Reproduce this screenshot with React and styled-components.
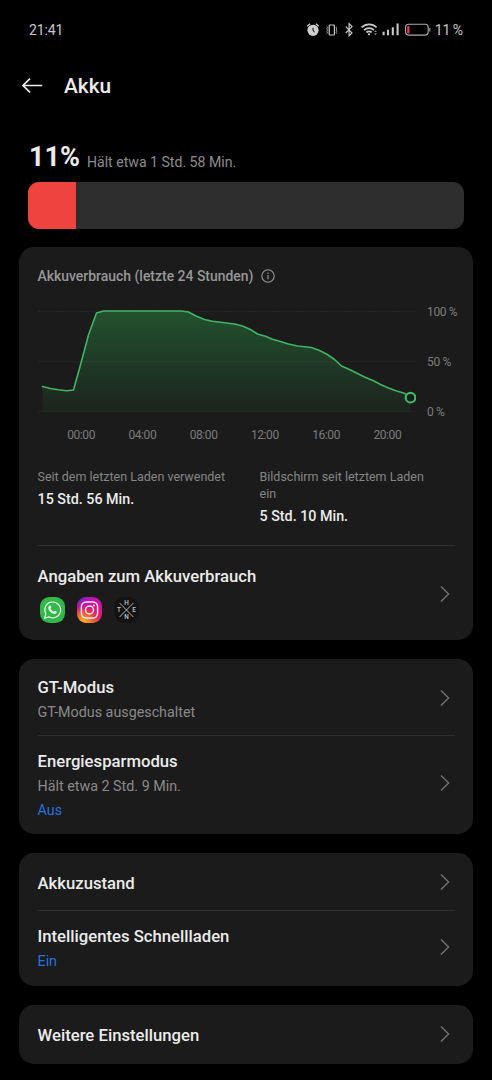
import styled, { createGlobalStyle } from "styled-components";

const GlobalStyle = createGlobalStyle`
  * {
    box-sizing: border-box;
  }

  body {
    margin: 0;
    background-color: #000;
    color: #ececec;
    font-family: Roboto, "Liberation Sans", sans-serif;
  }

  svg {
    display: block;
    flex-shrink: 0;
  }
`;

const Screen = styled.main`
  display: flex;
  flex-direction: column;
  width: 492px;
  height: 1080px;
  overflow: hidden;
  background-color: #000;

  > * {
    flex-shrink: 0;
  }
`;

const StatusBar = styled.div`
  display: flex;
  justify-content: space-between;
  align-items: center;
  height: 60px;
  padding: 0 29px;
  font-size: 14px;
  letter-spacing: -0.1px;
  color: #c8c8c8;
`;

const StatusIcons = styled.div`
  display: flex;
  align-items: center;
`;

const Percent = styled.span`
  margin-left: 4px;
  word-spacing: -0.8px;
`;

const Header = styled.header`
  display: flex;
  align-items: center;
  gap: 21px;
  height: 52px;
  padding-left: 21px;
`;

const Title = styled.h1`
  margin: 0;
  font-size: 20.8px;
  font-weight: 500;
  line-height: 24px;
`;

const Summary = styled.section`
  display: flex;
  align-items: flex-end;
  gap: 7px;
  height: 70px;
  padding: 0 28px 9px 29px;
`;

const Level = styled.span`
  font-size: 27px;
  font-weight: 700;
  line-height: 32px;
`;

const Remaining = styled.span`
  margin-bottom: 3px;
  font-size: 14.1px;
  line-height: 16px;
  color: #8c8c8c;
`;

const Bar = styled.div`
  height: 47px;
  margin: 0 28px 18px;
  border-radius: 11px;
  background-color: #2e2e2e;
  overflow: hidden;
`;

const BarFill = styled.div`
  height: 100%;
  background-color: #ee433f;
`;

const Card = styled.section`
  height: ${({ $height }) => $height}px;
  margin: 0 19px 19px;
  padding: 0 18.5px;
  border-radius: 15px;
  background-color: #1b1b1b;
`;

const CardHead = styled.div`
  display: flex;
  align-items: center;
  gap: 8px;
  height: 54px;
  padding-top: 4px;
  font-size: 13.95px;
  font-weight: 500;
  color: #979797;
`;

const ChartArea = styled.div`
  display: flex;
  gap: 11px;
  height: 120px;
`;

const YAxis = styled.div`
  display: flex;
  flex-direction: column;
  justify-content: space-between;
  height: 118px;
  padding-top: 4px;
  font-size: 12px;
  letter-spacing: -0.35px;
  line-height: 14px;
  color: #7c7c7c;
  white-space: nowrap;
`;

const XAxis = styled.div`
  display: flex;
  margin-top: 7px;
  padding-left: 13px;
  font-size: 12px;
  letter-spacing: -0.4px;
  line-height: 14px;
  color: #7c7c7c;

  span {
    width: 61.25px;
    text-align: center;
  }
`;

const Stats = styled.div`
  display: grid;
  grid-template-columns: 222px 175px;
  height: 103px;
  padding-top: 26px;
`;

const StatLabel = styled.div`
  font-size: 12.5px;
  line-height: 17px;
  color: #858585;
`;

const StatValue = styled.div`
  margin-top: 5px;
  font-size: 14.3px;
  font-weight: 500;
  line-height: 18px;
`;

const Row = styled.div`
  display: flex;
  justify-content: space-between;
  align-items: center;
  height: ${({ $height }) => $height}px;
  padding: ${({ $top }) => $top}px 4.5px ${({ $bottom }) => $bottom}px 0;
`;

const RowBody = styled.div`
  padding-top: ${({ $single }) => ($single ? 4 : 5)}px;
`;

const Divider = styled.div`
  height: 1px;
  background-color: #303030;
`;

const RowTitle = styled.div`
  font-size: 16.7px;
  font-weight: 500;
  line-height: 24px;
`;

const RowText = styled.div`
  font-size: 14.3px;
  line-height: 24px;
  color: ${({ $accent }) => ($accent ? "#2673dc" : "#8a8a8a")};
`;

const Apps = styled.div`
  display: flex;
  gap: 12px;
  margin: 8px 0 6px;
  padding-left: 2px;
`;

const chartPoints = [
  [42, 386.5], [50, 388.5], [58, 389.8], [66, 390.7], [73, 390], [80.5, 363],
  [88, 335], [96, 313], [103, 311], [181, 311], [188, 312], [196, 316.3],
  [204, 319.5], [212, 321.3], [220, 322.3], [234, 324], [242, 326],
  [250, 329.5], [257, 334], [265, 336.2], [272, 339.3], [280, 341.5],
  [288, 344], [297, 346], [311, 347.5], [319, 350.5], [326, 354],
  [334, 359.5], [341, 366], [349, 369.5], [356, 373], [364, 377],
  [373, 380.7], [380, 384.5], [388, 388], [396, 391], [404, 393.3], [410, 397.5],
];

const hours = ["00:00", "04:00", "08:00", "12:00", "16:00", "20:00"];

function UsageChart() {
  const line = chartPoints.map((p) => p.join(",")).join(" ");

  return (
    <svg width="378.5" height="120" viewBox="37.5 301 378.5 120">
      <defs>
        <linearGradient id="usage" x1="0" y1="0" x2="0" y2="1">
          <stop offset="0" stopColor="#22522f" />
          <stop offset="1" stopColor="#1c231d" />
        </linearGradient>
      </defs>
      <polygon points={`42,412 ${line} 410,412`} fill="url(#usage)" />
      {[311.5, 361.5, 411.5].map((y) => (
        <line
          key={y}
          x1="37.5"
          x2="416"
          y1={y}
          y2={y}
          stroke="#fff"
          strokeOpacity="0.05"
          strokeDasharray="2 1"
        />
      ))}
      <polyline
        points={line}
        fill="none"
        stroke="#41b465"
        strokeWidth="1.6"
        strokeLinejoin="round"
        strokeLinecap="round"
      />
      <circle cx="410" cy="397.7" r="4.8" fill="#1b1b1b" stroke="#3dba62" strokeWidth="2.2" />
    </svg>
  );
}

function Chevron() {
  return (
    <svg width="10" height="18" viewBox="0 0 10 18" fill="none" stroke="#727272" strokeWidth="1.4">
      <path d="M1 1.4 8.6 9 1 16.6" />
    </svg>
  );
}

function BackArrow() {
  return (
    <svg width="22" height="16" viewBox="0 0 22 16" fill="none" stroke="#ececec" strokeWidth="1.7">
      <path d="M21.3 7.5H2M9 0.7 2 7.5l7 6.8" />
    </svg>
  );
}

function InfoIcon() {
  return (
    <svg width="14" height="14" viewBox="0 0 14 14" fill="none" stroke="#979797" strokeWidth="1.1">
      <circle cx="7" cy="7" r="6.2" />
      <path d="M7 6v4.3M7 3.6v1.3" />
    </svg>
  );
}

function SystemIcons() {
  return (
    <svg width="125" height="16" viewBox="306 22 125 16" fill="none" stroke="#c8c8c8">
      {/* alarm */}
      <circle cx="313" cy="30.3" r="5.6" fill="#d0d0d0" stroke="none" />
      <path d="M307.2 26.2l2.8-2.3M318.8 26.2l-2.8-2.3" strokeWidth="1.4" />
      <path d="M313 27.8v2.9l1.8 1.4" stroke="#000" strokeWidth="1" />
      {/* vibrate */}
      <rect x="329.2" y="25" width="5.2" height="10" rx="0.8" strokeWidth="1.2" />
      <path d="M326.8 26.5l.7 1.2-.7 1.2.7 1.2-.7 1.2.7 1.2-.7 1.2M336.8 26.5l-.7 1.2.7 1.2-.7 1.2.7 1.2-.7 1.2.7 1.2" strokeWidth="0.8" />
      {/* bluetooth */}
      <path d="M345.8 26.6l6.2 6.4-2.9 2.9V23.7l2.9 2.9-6.2 6.4" strokeWidth="1.2" />
      {/* wifi */}
      <path d="M361.6 27.4a10.6 10.6 0 0 1 15 0M364.1 30.1a7 7 0 0 1 9.9 0M366.5 32.5a3.6 3.6 0 0 1 5.1 0" strokeWidth="1.8" />
      <circle cx="369" cy="34.3" r="1.1" fill="#d0d0d0" stroke="none" />
      <path d="M374.2 31.8l1.3-1.3 1.3 1.3zM374.2 33.6l1.3 1.3 1.3-1.3z" fill="#c8c8c8" stroke="none" />
      {/* signal */}
      <path d="M383.6 35.2v-3.4M388 35.2v-5.4M392.8 35.2v-8M397.6 35.2V23.5" strokeWidth="2.1" />
      {/* battery */}
      <rect x="405.6" y="24.3" width="22.6" height="10.8" rx="3" stroke="#aaa" strokeWidth="1.1" />
      <path d="M429.8 28v3.4" stroke="#999" strokeWidth="1.2" />
      <rect x="407.2" y="26" width="2.3" height="7.5" rx="1" fill="#e0404a" stroke="none" />
    </svg>
  );
}

function WhatsAppIcon() {
  return (
    <svg width="25" height="26" viewBox="0 0 25 26">
      <rect width="25" height="26" rx="9.5" fill="#34b64b" />
      <path
        d="M4.6 21.3l1.2-4.5a7.9 7.9 0 1 1 3.2 3.1z"
        fill="none"
        stroke="#e2f6e2"
        strokeWidth="1.2"
        strokeLinejoin="round"
      />
      <path
        d="M9.4 8.8c.5-.4 1.1-.3 1.3.2l.6 1.5c.1.4-.5 1-.7 1.3.7 1.4 1.7 2.3 3.1 2.9.4-.3.8-1.1 1.2-1l1.7.8c.4.3 0 1.5-.5 1.9-1.2.9-2.8.4-4.2-.4-1.6-.9-2.7-2.2-3.4-3.7-.5-1.3-.2-2.7.9-3.5z"
        fill="#e2f6e2"
      />
    </svg>
  );
}

function InstagramIcon() {
  return (
    <svg width="25" height="26" viewBox="0 0 25 26">
      <defs>
        <linearGradient id="igBase" x1="0.7" y1="0" x2="0.3" y2="1">
          <stop offset="0" stopColor="#c214b5" />
          <stop offset="0.55" stopColor="#e01b6c" />
          <stop offset="1" stopColor="#ec5a30" />
        </linearGradient>
        <radialGradient id="igWarm" cx="0.25" cy="1.02" r="0.7">
          <stop offset="0" stopColor="#f8c228" />
          <stop offset="0.45" stopColor="#f08628" stopOpacity="0.8" />
          <stop offset="1" stopColor="#f04a3a" stopOpacity="0" />
        </radialGradient>
        <radialGradient id="igCool" cx="0.1" cy="0.02" r="0.6">
          <stop offset="0" stopColor="#5b22e0" />
          <stop offset="1" stopColor="#a814d0" stopOpacity="0" />
        </radialGradient>
      </defs>
      <rect width="25" height="26" rx="9.5" fill="url(#igBase)" />
      <rect width="25" height="26" rx="9.5" fill="url(#igWarm)" />
      <rect width="25" height="26" rx="9.5" fill="url(#igCool)" />
      <g fill="none" stroke="#f8e4f0" strokeWidth="1.5">
        <rect x="4.4" y="4.9" width="16.2" height="16.2" rx="4.8" />
        <circle cx="12.5" cy="13" r="4" />
      </g>
      <circle cx="16.9" cy="8.6" r="1" fill="#f8e4f0" />
    </svg>
  );
}

function ThenIcon() {
  return (
    <svg width="25" height="26" viewBox="0 0 25 26">
      <rect width="25" height="26" rx="9.5" fill="#131313" />
      <path d="M5.6 6l13.8 14M19.4 6L5.6 20" stroke="#c4c4c4" strokeWidth="0.9" />
      <g fill="#c4c4c4" fontSize="6.4" fontWeight="500" textAnchor="middle">
        <text x="12.5" y="8.4">H</text>
        <text x="5" y="15.3">T</text>
        <text x="20" y="15.3">E</text>
        <text x="12.5" y="22.4">N</text>
      </g>
    </svg>
  );
}

function SettingRow({ title, height, top = 0, bottom = 0, children }) {
  return (
    <Row $height={height} $top={top} $bottom={bottom}>
      <RowBody $single={!children}>
        <RowTitle>{title}</RowTitle>
        {children}
      </RowBody>
      <Chevron />
    </Row>
  );
}

export default function App() {
  const level = 11;

  return (
    <Screen>
      <GlobalStyle />
      <StatusBar>
        <span>21:41</span>
        <StatusIcons>
          <SystemIcons />
          <Percent>{level} %</Percent>
        </StatusIcons>
      </StatusBar>
      <Header>
        <BackArrow />
        <Title>Akku</Title>
      </Header>
      <Summary>
        <Level>{level}%</Level>
        <Remaining>Hält etwa 1 Std. 58 Min.</Remaining>
      </Summary>
      <Bar>
        <BarFill style={{ width: `${level}%` }} />
      </Bar>

      <Card $height={393}>
        <CardHead>
          Akkuverbrauch (letzte 24 Stunden)
          <InfoIcon />
        </CardHead>
        <ChartArea>
          <UsageChart />
          <YAxis>
            <span>100 %</span>
            <span>50 %</span>
            <span>0 %</span>
          </YAxis>
        </ChartArea>
        <XAxis>
          {hours.map((hour) => (
            <span key={hour}>{hour}</span>
          ))}
        </XAxis>
        <Stats>
          <div>
            <StatLabel>Seit dem letzten Laden verwendet</StatLabel>
            <StatValue>15 Std. 56 Min.</StatValue>
          </div>
          <div>
            <StatLabel>Bildschirm seit letztem Laden ein</StatLabel>
            <StatValue>5 Std. 10 Min.</StatValue>
          </div>
        </Stats>
        <Divider />
        <SettingRow title="Angaben zum Akkuverbrauch" height={96}>
          <Apps>
            <WhatsAppIcon />
            <InstagramIcon />
            <ThenIcon />
          </Apps>
        </SettingRow>
      </Card>

      <Card $height={175}>
        <SettingRow title="GT-Modus" height={76} top={1}>
          <RowText>GT-Modus ausgeschaltet</RowText>
        </SettingRow>
        <Divider />
        <SettingRow title="Energiesparmodus" height={98} bottom={4}>
          <RowText>Hält etwa 2 Std. 9 Min.</RowText>
          <RowText $accent>Aus</RowText>
        </SettingRow>
      </Card>

      <Card $height={133}>
        <SettingRow title="Akkuzustand" height={57} top={1} />
        <Divider />
        <SettingRow title="Intelligentes Schnellladen" height={75} bottom={4}>
          <RowText $accent>Ein</RowText>
        </SettingRow>
      </Card>

      <Card $height={59}>
        <SettingRow title="Weitere Einstellungen" height={59} bottom={1} />
      </Card>
    </Screen>
  );
}
